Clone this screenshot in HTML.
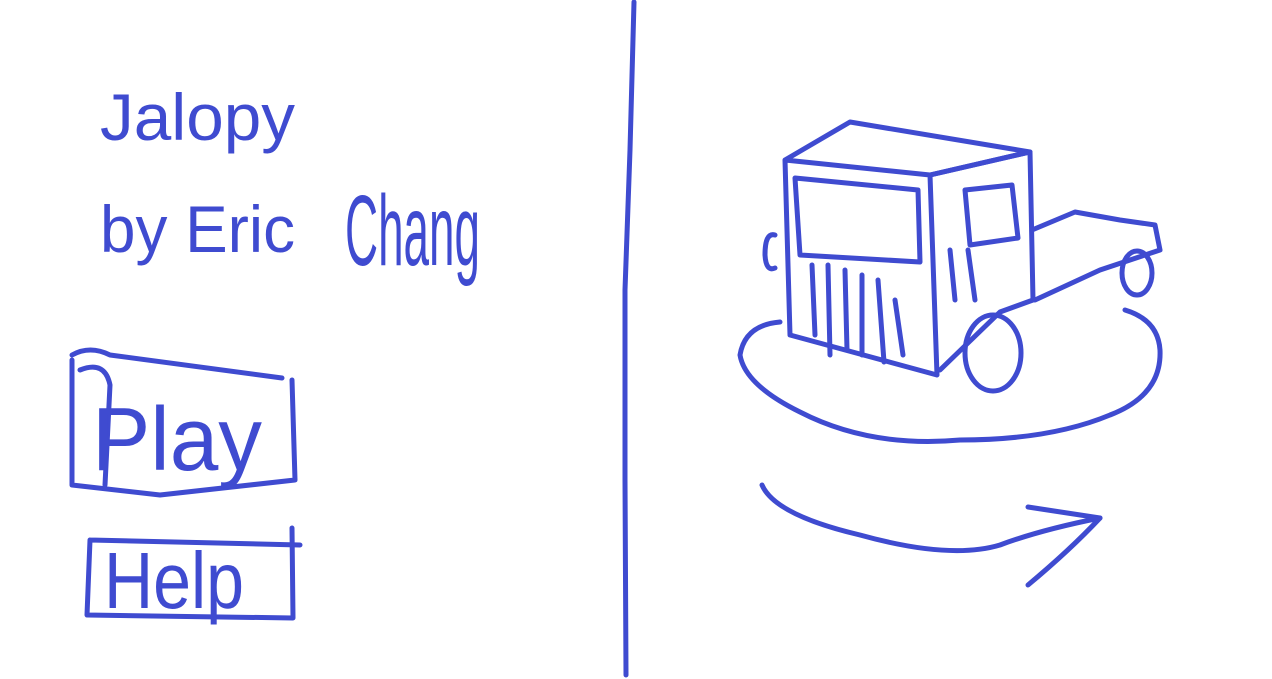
<!DOCTYPE html>
<html><head><meta charset="utf-8"><style>
html,body{margin:0;padding:0;background:#fff;width:1272px;height:679px;overflow:hidden}
svg{display:block}
text{font-family:"Liberation Sans",sans-serif;fill:#3f4bd0}
</style></head><body>
<svg width="1272" height="679" viewBox="0 0 1272 679" fill="none" stroke="#3f4bd0" stroke-width="5" stroke-linecap="round" stroke-linejoin="round">
<!-- divider -->
<path d="M634 2 L630 150 L625 290 L625 480 L626 675"/>
<!-- title -->
<text x="100" y="140" font-size="66" textLength="195" lengthAdjust="spacingAndGlyphs" stroke="none">Jalopy</text>
<text x="100" y="252" font-size="66" textLength="195" lengthAdjust="spacingAndGlyphs" stroke="none">by Eric</text>
<text x="345" y="265" font-size="100" textLength="135" lengthAdjust="spacingAndGlyphs" stroke="none">Chang</text>
<!-- play box -->
<path d="M72 355 Q90 345 110 355 L282 378 M72 360 L72 485 L160 495 L295 480 L292 380"/>
<path d="M80 370 Q105 360 110 385 L105 485"/>
<text x="92" y="470" font-size="90" textLength="170" lengthAdjust="spacingAndGlyphs" stroke="none">Play</text>
<!-- help box -->
<path d="M90 540 L87 615 L293 618 L292 528 M90 540 L300 545"/>
<text x="104" y="608" font-size="80" textLength="140" lengthAdjust="spacingAndGlyphs" stroke="none">Help</text>
<!-- truck -->
<path d="M785 160 L850 122 L1030 152 L930 175 L785 160 L790 335 L937 375 L930 175"/>
<path d="M795 178 L918 190 L920 262 L800 255 Z"/>
<path d="M812 265 L815 335 M828 265 L830 355 M845 270 L847 350 M862 275 L862 355 M878 280 L884 362 M895 300 L903 355"/>
<path d="M930 175 L1030 152 L1033 300 L1000 312 L940 370"/>
<path d="M965 190 L1012 185 L1018 238 L970 245 Z M950 250 L955 300 M968 250 L975 300"/>
<path d="M1032 230 L1075 212 L1120 220 L1155 225 L1160 250 L1100 270 L1035 300"/>
<ellipse cx="993" cy="353" rx="28" ry="38"/>
<ellipse cx="1137" cy="273" rx="15" ry="22"/>
<path d="M775 235 Q765 232 765 255 Q766 272 775 268"/>
<path d="M780 322 Q745 325 740 355 Q745 385 800 412 Q870 448 960 440 Q1050 440 1110 415 Q1162 395 1160 350 Q1158 320 1125 310"/>
<!-- arrow -->
<path d="M762 485 Q775 515 860 535 Q950 560 1000 545 Q1040 530 1100 518"/>
<path d="M1028 507 L1100 518 Q1070 550 1028 585"/>
</svg>
</body></html>
